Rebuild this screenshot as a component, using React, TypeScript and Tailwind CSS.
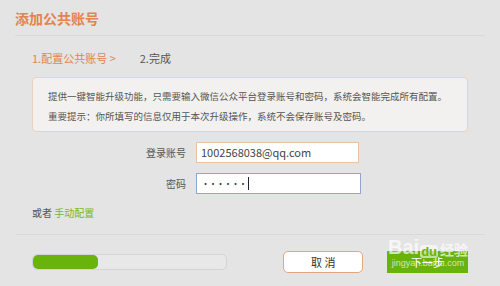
export default function App() {
  const font = { fontFamily: '"Microsoft YaHei", "Noto Sans CJK SC", "Liberation Sans", sans-serif' }

  return (
    <div className="relative w-[500px] h-[286px] overflow-hidden bg-[#e4e4e4]" style={font}>
      {/* 标题 */}
      <div className="mx-[15px] h-[36px] pt-[9px] border-b border-[#d9d9d9]">
        <h1 className="text-[14px] leading-[18px] font-bold text-[#e3834f]">添加公共账号</h1>
      </div>

      <div className="px-[32px]">
        {/* 步骤 */}
        <div className="flex items-center h-[16px] mt-[14px] text-[11px]">
          <span className="text-[#e3834f]">1.配置公共账号 &gt;</span>
          <span className="ml-[24px] text-[#555]">2.完成</span>
        </div>

        {/* 提示框 */}
        <div className="mt-[11px] h-[55px] w-[436px] rounded-[4px] border border-[#efcfb8] bg-[#f3f1ef] pl-[15px] pt-[8px] text-[9.5px] leading-[20px] text-[#555] whitespace-nowrap">
          <p>提供一键智能升级功能，只需要输入微信公众平台登录账号和密码，系统会智能完成所有配置。</p>
          <p>重要提示：你所填写的信息仅用于本次升级操作，系统不会保存账号及密码。</p>
        </div>

        {/* 表单 */}
        <div className="mt-[10px] flex items-center">
          <label className="w-[164px] pr-[10px] text-right text-[10px] text-[#555]">登录账号</label>
          <div className="flex h-[21px] w-[163px] items-center border border-[#e8c4a6] bg-white pl-[4px] text-[11px] text-[#444]">
            1002568038@qq.com
          </div>
        </div>
        <div className="mt-[10px] flex items-center">
          <label className="w-[164px] pr-[10px] text-right text-[10px] text-[#555]">密码</label>
          <div className="flex h-[21px] w-[165px] items-center border border-[#8ea5d6] bg-white pl-[4px] text-[#333]">
            <span className="text-[9px] leading-[10px] tracking-[-1.5px]">••••••</span>
            <span className="ml-[2px] h-[13px] w-px bg-[#222]"></span>
          </div>
        </div>

        <div className="mt-[12px] text-[10px] leading-[14px] text-[#555]">
          或者 <span className="text-[#76b82a]">手动配置</span>
        </div>
      </div>

      {/* 底部 */}
      <div className="mx-[15px] mt-[14px] border-t border-[#d9d9d9]"></div>
      <div className="flex items-center px-[32px] pt-[16px]">
        <div className="h-[16px] w-[196px] rounded-[5px] border border-[#d4d4d4] bg-[#e8e8e8]">
          <div className="h-full w-[65px] rounded-[5px] bg-[#69b30a]"></div>
        </div>
        <button className="ml-[56px] h-[22px] w-[80px] rounded-[5px] border border-[#e2a77e] bg-white text-[11px] text-[#333]">
          取 消
        </button>
        <button className="ml-[24px] h-[22px] w-[81px] bg-[#6ab30c] text-[11px] text-white">
          下一步
        </button>
      </div>

      {/* 水印 */}
      <div className="pointer-events-none absolute left-[388px] top-[236px] flex flex-col items-center text-white/70">
        <div className="flex items-end text-[20px] font-bold leading-[22px]" style={{ fontFamily: '"Liberation Sans", sans-serif' }}>
          <span>Bai</span>
          <span className="ml-[1px] rounded-[3px] bg-white/60 px-[1px] text-[13px] leading-[13px] text-[#6ab30c]">du</span>
          <span className="ml-[2px] text-[14px] leading-[17px]" style={font}>经验</span>
        </div>
        <div className="text-[9px] leading-[11px]" style={{ fontFamily: '"Liberation Sans", sans-serif' }}>jingyan.baidu.com</div>
      </div>
    </div>
  )
}
